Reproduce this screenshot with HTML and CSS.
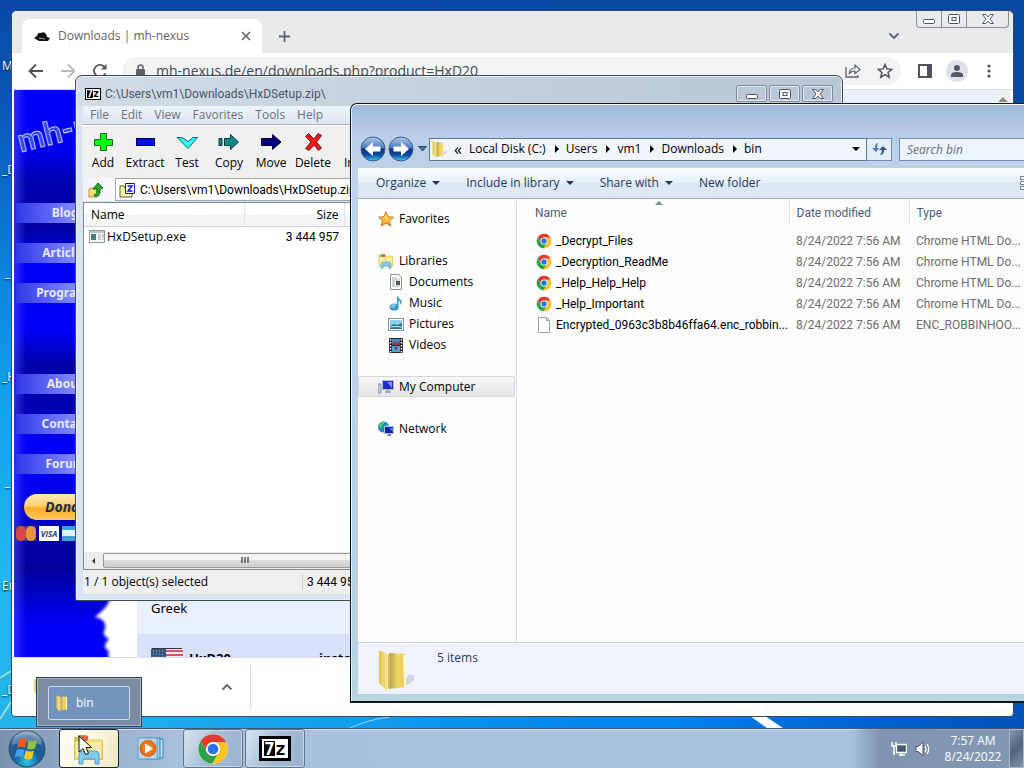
FILE: index.html
```html
<!DOCTYPE html>
<html lang="en">
<head>
<meta charset="utf-8">
<title>Desktop</title>
<link rel="stylesheet" href="styles.css">
</head>
<body>
<svg class="defs" aria-hidden="true">
  <defs>
    <linearGradient id="gold" x1="0" x2="1"><stop offset="0" stop-color="#e3c348"/><stop offset="1" stop-color="#fbf0b0"/></linearGradient>
    <linearGradient id="gold2" x1="0" x2="1"><stop offset="0" stop-color="#b89e40"/><stop offset=".5" stop-color="#f0d76c"/><stop offset="1" stop-color="#e6c850"/></linearGradient>
    <linearGradient id="orbblue" x1="0" y1="0" x2="0" y2="1"><stop offset="0" stop-color="#b4cbe8"/><stop offset=".45" stop-color="#4d79bd"/><stop offset=".5" stop-color="#0b3382"/><stop offset=".75" stop-color="#0b4a9e"/><stop offset="1" stop-color="#3ed0f4"/></linearGradient>
    <radialGradient id="startorb" cx=".5" cy=".85" r=".9"><stop offset="0" stop-color="#2fc8ee"/><stop offset=".4" stop-color="#155c98"/><stop offset=".75" stop-color="#2e5f92"/><stop offset="1" stop-color="#9fbbd6"/></radialGradient>
    <radialGradient id="note" cx=".4" cy=".3" r=".8"><stop offset="0" stop-color="#8fd4f4"/><stop offset="1" stop-color="#1470b4"/></radialGradient>
    <linearGradient id="starfill" x1="0" y1="0" x2="0" y2="1"><stop offset="0" stop-color="#ffe878"/><stop offset="1" stop-color="#f39a18"/></linearGradient>
    <radialGradient id="glow"><stop offset="0" stop-color="#ff9a3c"/><stop offset="1" stop-color="#e4640c"/></radialGradient>
    <filter id="soft"><feGaussianBlur stdDeviation="1.500"/></filter>
  </defs>
  <symbol id="chrome" viewBox="0 0 48 48">
    <circle cx="24" cy="24" r="22" fill="#fff"/>
    <path fill="#e33b2e" d="M24 14H43.6A22 22 0 0 0 5.54 12.03L15.34 29A10 10 0 0 1 24 14z"/>
    <path fill="#fcc31e" d="M32.66 29L22.86 45.97A22 22 0 0 0 43.6 14H24A10 10 0 0 1 32.66 29z"/>
    <path fill="#2ba24c" d="M15.34 29L5.54 12.03A22 22 0 0 0 22.86 45.97L32.66 29A10 10 0 0 1 15.34 29z"/>
    <circle cx="24" cy="24" r="10.4" fill="#fff"/><circle cx="24" cy="24" r="8" fill="#2b74e8"/>
  </symbol>
  <symbol id="folder" viewBox="0 0 36 44">
    <path d="M24 38q12-2 13-10l-6-2z" fill="#9aa0b0" opacity=".35"/>
    <path d="M11 5L28 6v33L11 41z" fill="url(#gold2)"/>
    <path d="M25 7l3-1v33l-2 1z" fill="#fff8d0"/>
    <path d="M1 2l11 5v32l-3 4L1 35z" fill="url(#gold)"/>
    <path d="M11 7v33" stroke="#a88c34" fill="none"/>
  </symbol>
  <symbol id="library" viewBox="0 0 32 32">
    <path d="M1 4h12l2 3h15v20H1z" fill="#d8c05a"/><path d="M5 2h9v7H5z" fill="#79b957"/><path d="M8 3h7v5H8z" fill="#e8604a"/><path d="M17 4h11v7H17z" fill="#f4f4e8"/>
    <path d="M2 8h12l2-2h13v20H2z" fill="#f3dc78"/><path d="M3 9h11v15H3zM17 9h11v15H17z" fill="#faedaa"/>
    <path d="M6 31V22q0-4 4-4h12q4 0 4 4v9h-4v-5H10v5z" fill="#84c8ec" stroke="#4a9ccc"/>
  </symbol>
  <symbol id="minus" viewBox="0 0 12 12"><rect x=".5" y="6.5" width="11" height="4" rx="1" fill="#fff" stroke="#4e5560"/></symbol>
  <symbol id="maxi" viewBox="0 0 12 12"><rect x=".5" y="1.5" width="11" height="9" rx="1" fill="#fff" stroke="#4e5560"/><rect x="4" y="4.5" width="4" height="3" fill="#fff" stroke="#4e5560"/></symbol>
  <symbol id="shut" viewBox="0 0 12 12"><path d="M.6 1.5h3.2L6 3.9l2.2-2.4h3.2L8 6l3.4 4.5H8.200L6 8.100l-2.200 2.400H.6L4 6z" fill="#fff" stroke="#4e5560"/></symbol>
</svg>

<div class="screen">
<main class="desktop">
  <svg class="streaks" viewBox="0 0 1024 728" preserveAspectRatio="none" aria-hidden="true"><path d="M750 716h15l18 12h-16z" fill="#fff"/><path d="M350 728q20-9 40-11" stroke="#8fdcff" fill="none"/><path d="M0 678l11-7M0 719l11-17" stroke="#9ee0c8" stroke-width="2" fill="none"/></svg>
  <span class="label l1">M</span><span class="label l2">_D</span><span class="label l3">_</span><span class="label l4">_H</span><span class="label l5">_</span><span class="label l6">En</span><span class="label l7">_D</span>

  <section class="browser" aria-label="Browser">
    <header class="tabstrip">
      <div class="tab">
        <svg width="16" height="16" viewBox="0 0 16 16"><path d="M3 8q1-4 4-3q3-2 5 1l1 3 3 1-2 3H5L0 10z" fill="#111"/><path d="M5 10l6 1" stroke="#999"/></svg>
        <span class="tab-title">Downloads | mh-nexus</span>
        <button class="plain" aria-label="Close tab"><svg width="10" height="10" viewBox="0 0 10 10"><path d="M1 1l8 8M9 1l-8 8" stroke="#5f6368" stroke-width="1.600"/></svg></button>
      </div>
      <button class="plain newtab" aria-label="New tab"><svg width="13" height="13" viewBox="0 0 13 13"><path d="M6.500 1v11M1 6.500h11" stroke="#5f6368" stroke-width="1.800"/></svg></button>
      <button class="plain tabsearch" aria-label="Search tabs"><svg width="12" height="12" viewBox="0 0 12 12"><path d="M1.500 3.500L6 8l4.500-4.500" fill="none" stroke="#5f6368" stroke-width="1.800"/></svg></button>
      <div class="controls joined">
        <button aria-label="Minimize"><svg width="12" height="12"><use href="#minus"/></svg></button><button aria-label="Maximize"><svg width="12" height="12"><use href="#maxi"/></svg></button><button class="wide" aria-label="Close"><svg width="12" height="12"><use href="#shut"/></svg></button>
      </div>
    </header>
    <div class="navbar">
      <button class="plain" aria-label="Back"><svg width="16" height="16" viewBox="0 0 16 16"><path d="M15 8H2M8 1.500L1.500 8 8 14.500" fill="none" stroke="#505458" stroke-width="1.800"/></svg></button>
      <button class="plain" aria-label="Forward"><svg width="16" height="16" viewBox="0 0 16 16"><path d="M1 8h13M8 1.500L14.500 8 8 14.500" fill="none" stroke="#b8babd" stroke-width="1.800"/></svg></button>
      <button class="plain" aria-label="Reload"><svg width="16" height="16" viewBox="0 0 16 16"><path d="M13.500 10.500A6 6 0 1 1 13 4.500" fill="none" stroke="#505458" stroke-width="1.800"/><path d="M9 6.500h5.500V1z" fill="#505458"/></svg></button>
      <div class="omnibox">
        <svg width="12" height="16" viewBox="0 0 12 16"><rect x="2" y="6" width="9" height="8" rx="1" fill="#5f6368"/><path d="M4 7V4.500a2.500 2.500 0 0 1 5 0V7" fill="none" stroke="#5f6368" stroke-width="1.500"/></svg>
        <input class="url" aria-label="Address" value="mh-nexus.de/en/downloads.php?product=HxD20">
        <button class="plain" aria-label="Share"><svg width="16" height="16" viewBox="0 0 16 16"><path d="M1 4v10h12v-2" fill="none" stroke="#5f6368" stroke-width="1.300"/><path d="M4 11q1-6 6-6V2l5 4.500-5 4V8q-4 0-6 3z" fill="none" stroke="#5f6368" stroke-width="1.200"/></svg></button>
        <button class="plain" aria-label="Bookmark"><svg width="16" height="16" viewBox="0 0 16 16"><path d="M8 1.500l1.900 4.400 4.800.4-3.600 3.200 1.100 4.700L8 11.700l-4.200 2.500 1.100-4.700L1.300 6.300l4.800-.4z" fill="none" stroke="#505458" stroke-width="1.500"/></svg></button>
      </div>
      <button class="plain" aria-label="Side panel"><svg width="16" height="16" viewBox="0 0 16 16"><rect x="2" y="2" width="12" height="12" fill="none" stroke="#505458" stroke-width="2"/><path d="M10 2h5v12h-5z" fill="#505458"/></svg></button>
      <button class="plain profile" aria-label="Profile"><svg width="14" height="14" viewBox="0 0 14 14"><circle cx="7" cy="4" r="3" fill="#505860"/><path d="M1 13v-2q0-3 6-3t6 3v2z" fill="#505860"/></svg></button>
      <button class="plain" aria-label="Menu"><svg width="16" height="16" viewBox="0 0 16 16"><circle cx="8" cy="3" r="1.600" fill="#505458"/><circle cx="8" cy="8" r="1.600" fill="#505458"/><circle cx="8" cy="13" r="1.600" fill="#505458"/></svg></button>
    </div>
    <div class="page">
      <nav class="sidebar">
        <span class="sitelogo">mh-nexus</span>
        <a href="#">Blog</a><a href="#">Articles</a><a href="#">Programs</a><a class="later" href="#">About</a><a href="#">Contact</a><a href="#">Forum</a>
        <button class="donate">Donate</button>
        <div class="cards"><span class="mc"><i></i><i></i></span><span class="visa">VISA</span><span class="amex"></span></div>
        <svg class="torn" width="56" height="76" viewBox="0 0 56 76" aria-hidden="true"><path d="M60-4H30q4 14-1 22-2 8-15 18 12 2 10 12-4 6 4 10-8 8 0 12-2 6 2 12h30z" fill="#fff" filter="url(#soft)"/><path d="M40 40q-4 12-8 16 6 6 2 20h24V40z" fill="#fff"/></svg>
      </nav>
      <div class="article">
        <p class="lang">Greek</p>
        <div class="product">
          <svg width="32" height="22" viewBox="0 0 32 22"><rect width="32" height="22" rx="2" fill="#f8e8ec"/><path d="M13 3h19M13 7h19M0 13h32M0 17h32" stroke="#d0556a" stroke-width="2"/><path d="M0 2q0-2 2-2h13v11H0z" fill="#34567e"/><path d="M2 3h12M2 6h12M2 9h12" stroke="#a8bcd0" stroke-dasharray="1 2"/><path d="M1 .5h30" stroke="#333"/></svg>
          <b class="pname">HxD20</b><b>installable</b>
        </div>
      </div>
      <div class="pagescroll" aria-hidden="true"><svg width="10" height="6"><path d="M0 6l5-5 5 5z" fill="#8a8a8a"/></svg></div>
    </div>
    <footer class="downloads">
      <svg width="14" height="18"><use href="#folder"/></svg>
      <button class="plain dlmore" aria-label="More"><svg width="12" height="12" viewBox="0 0 12 12"><path d="M1.500 8.500L6 4l4.500 4.500" fill="none" stroke="#5f6368" stroke-width="1.800"/></svg></button>
    </footer>
  </section>

  <section class="zipwin" aria-label="7-Zip">
    <header class="ziptitle">
      <span class="seven small"><b>7</b><b>z</b></span>
      <span class="path">C:\Users\vm1\Downloads\HxDSetup.zip\</span>
      <div class="controls">
        <button aria-label="Minimize"><svg width="12" height="12"><use href="#minus"/></svg></button><button aria-label="Maximize"><svg width="12" height="12"><use href="#maxi"/></svg></button><button aria-label="Close"><svg width="12" height="12"><use href="#shut"/></svg></button>
      </div>
    </header>
    <nav class="menu"><button>File</button><button>Edit</button><button>View</button><button>Favorites</button><button>Tools</button><button>Help</button></nav>
    <div class="ziptools">
      <button><svg width="22" height="20" viewBox="0 0 22 20"><path d="M8.500 1.500h6v6h6v6h-6v5h-6v-5h-6v-6h6z" fill="#00ff10" stroke="#126a12"/></svg>Add</button>
      <button><svg width="22" height="20" viewBox="0 0 22 20"><rect x="2.500" y="6.500" width="18" height="7" fill="#0010f0" stroke="#000040"/></svg>Extract</button>
      <button><svg width="22" height="20" viewBox="0 0 22 20"><path d="M1 5.500h5l6 4 5-4h4.500L12 16.500z" fill="#30f4f4" stroke="#0b6c78"/></svg>Test</button>
      <button><svg width="22" height="20" viewBox="0 0 22 20"><path d="M1 6.500h3v7H1zM6.500 6.500h6v-4l8 7.500-8 7.500v-4h-6z" fill="#108888" stroke="#063a40"/></svg>Copy</button>
      <button><svg width="22" height="20" viewBox="0 0 22 20"><path d="M1.500 6.500h11v-4l8.500 7.500-8.500 7.500v-4h-11z" fill="#000080" stroke="#000030"/></svg>Move</button>
      <button><svg width="22" height="20" viewBox="0 0 22 20"><path d="M3.500 4.500l3-3L12 7l4-5.500 3.500 2L14.500 10l5 6-3 2.500L12 13l-5 5.500-3.500-2L9 10z" fill="#f01818" stroke="#801010"/></svg>Delete</button>
      <button><svg width="22" height="20" viewBox="0 0 22 20"><path d="M9 2h5v4H9zM9 8h5v10H9z" fill="#f0e010" stroke="#665"/></svg>Info</button>
    </div>
    <div class="zipaddr">
      <button class="up" aria-label="Up"><svg width="16" height="16" viewBox="0 0 16 16"><path d="M1 7l4-1 4 1v8H1z" fill="#f2dd70" stroke="#b89a3c"/><path d="M10 14q-4 1-4-1 3 0 3-6H5l5-6 5 5-3 1q1 5-2 7z" fill="#36a832" stroke="#146a14"/></svg></button>
      <div class="zipbox"><svg width="16" height="16" viewBox="0 0 16 16"><path d="M1 4h4l1 2h7v9H1z" fill="#ffff9a" stroke="#555"/><path d="M6.500 1.500h9v10h-9z" fill="#fff" stroke="#1414a0"/><path d="M8.500 4h4.500L9 9h4.500" fill="none" stroke="#1010c0" stroke-width="1.400"/></svg><input class="path" aria-label="Archive path" value="C:\Users\vm1\Downloads\HxDSetup.zip\"></div>
    </div>
    <div class="ziplist">
      <table>
        <colgroup><col class="zc1"><col class="zc2"><col></colgroup>
        <thead><tr><th>Name</th><th class="num">Size</th><th></th></tr></thead>
        <tbody><tr><td><span class="cell"><svg width="16" height="13" viewBox="0 0 16 13"><rect x=".5" y=".5" width="15" height="12" fill="#f4f6f8" stroke="#8a9a9c"/><path d="M1 2h14" stroke="#b8c8cc" stroke-width="2"/><path d="M2 4h5v6H2z" fill="#4b7c74"/><path d="M9 5h3M9 7h3M9 9h3M14 4v4M14 9v1" stroke="#98a0a8"/></svg>HxDSetup.exe</span></td><td class="num">3 444 957</td><td></td></tr></tbody>
      </table>
      <div class="hscroll" aria-hidden="true"><svg width="5" height="8"><path d="M4 1v6L1 4z" fill="#333"/></svg><div class="thumb"><svg width="9" height="7"><path d="M1 0v6M4 0v6M7 0v6" stroke="#555" stroke-width="1.500"/></svg></div></div>
    </div>
    <footer class="zipstatus"><span>1 / 1 object(s) selected</span><span>3 444 957</span></footer>
  </section>

  <section class="explorer" aria-label="bin">
    <header class="exhead">
      <button class="orb" aria-label="Back"><svg width="26" height="26" viewBox="0 0 26 26"><circle cx="13" cy="13" r="12" fill="url(#orbblue)" stroke="#415a86"/><path d="M5 13l8-7v4.500h7.500v5H13V20z" fill="#fff"/></svg></button>
      <button class="orb" aria-label="Forward"><svg width="26" height="26" viewBox="0 0 26 26"><circle cx="13" cy="13" r="12" fill="url(#orbblue)" stroke="#415a86"/><path d="M21 13l-8-7v4.500H5.500v5H13V20z" fill="#fff"/></svg></button>
      <button class="plain recent" aria-label="Recent"><svg width="9" height="6"><path d="M.5.5h8l-4 4.500z" fill="#4f78ae" stroke="#274470"/></svg></button>
      <nav class="crumbs">
        <svg width="15" height="18"><use href="#folder"/></svg><span class="back">«</span>
        <a href="#">Local Disk (C:)</a><i class="tri"></i><a href="#">Users</a><i class="tri"></i><a href="#">vm1</a><i class="tri"></i><a href="#">Downloads</a><i class="tri"></i><a href="#">bin</a>
        <i class="down"></i>
      </nav>
      <button class="refresh" aria-label="Refresh"><svg width="16" height="14" viewBox="0 0 16 14"><path d="M7 1Q4 1 4 6H1l4 4 3-4H6q0-3 1-5z" fill="#4678bc"/><path d="M9 13q4 0 4-5h3l-4-4-4 4h3q0 3-2 5z" fill="#2d5490"/></svg></button>
      <input class="search" placeholder="Search bin" aria-label="Search bin">
    </header>
    <div class="exbody">
      <div class="command"><button>Organize<i class="down"></i></button><button>Include in library<i class="down"></i></button><button>Share with<i class="down"></i></button><button>New folder</button>
        <button class="view" aria-label="View"><svg width="20" height="14" viewBox="0 0 20 14"><path d="M.5.5h4v3h-4zM.5 5.500h4v3h-4zM.5 10.500h4v3h-4zM7 2h9M7 7h9M7 12h9" fill="#fff" stroke="#6a7c94"/></svg></button></div>
      <div class="panes">
        <nav class="tree">
          <a href="#"><svg width="16" height="16" viewBox="0 0 16 16"><path d="M8 .8l2.200 4.900 5.300.5-4 3.500 1.200 5.300L8 12.300 3.300 15l1.200-5.300-4-3.500 5.300-.5z" fill="url(#starfill)" stroke="#c87828"/></svg>Favorites</a>
          <a class="gap" href="#"><svg width="16" height="16"><use href="#library"/></svg>Libraries</a>
          <a class="sub" href="#"><svg width="16" height="16" viewBox="0 0 16 16"><path d="M2.500.5h8l3 3v12h-11z" fill="#fff" stroke="#868c92"/><path d="M4 4h5M4 6h8M4 8h3M4 10h3M4 12h8" stroke="#a0a8b0"/><path d="M8 7h4v4H8z" fill="#4b5560"/></svg>Documents</a>
          <a class="sub" href="#"><svg width="16" height="16" viewBox="0 0 16 16"><ellipse cx="6" cy="12" rx="4.500" ry="3.500" fill="url(#note)"/><path d="M9 12V0q1 3 3.500 4.500Q15 7 12.500 10q0-4-2-4.500V12z" fill="#3f95c4"/></svg>Music</a>
          <a class="sub" href="#"><svg width="16" height="16" viewBox="0 0 16 16"><rect x=".5" y="2.500" width="15" height="12" fill="#fff" stroke="#8c969e"/><path d="M2 4h12v9H2z" fill="#8ed0f0"/><path d="M2 10l4-2 3 1 5-2v6H2z" fill="#26758c"/><path d="M2 11q5-1 12 0" stroke="#d5f2f8" fill="none"/></svg>Pictures</a>
          <a class="sub" href="#"><svg width="16" height="16" viewBox="0 0 16 16"><path d="M1 1h14v15H1z" fill="#20262e"/><path d="M4 2h8v6H4z" fill="#4688c4"/><path d="M4 9h8v6H4z" fill="#52a4e4"/><path d="M4 7l3-3 2 2 3-2v4H4zM6 10h4l-2 4z" fill="#8a3f50"/><path d="M2.500 2v14M13.500 2v14" stroke="#fff" stroke-width="1.500" stroke-dasharray="1.500 1.500"/></svg>Videos</a>
          <a class="gap current" href="#"><svg width="16" height="16" viewBox="0 0 16 16"><path d="M0 5h3v9H0z" fill="#c4ccd8" stroke="#8e98a8"/><path d="M4.500 1.500h11v9h-11z" fill="#1b2cc0" stroke="#b8c0d0"/><path d="M9 3h5v6z" fill="#7f9bf0"/><path d="M8 11h4l1 3H7z" fill="#a0aaba"/></svg>My Computer</a>
          <a class="gap" href="#"><svg width="16" height="16" viewBox="0 0 16 16"><circle cx="5.500" cy="6" r="5.500" fill="#1b88b8"/><path d="M1 3q3-4 6-2L4 5 2 8zM6 6l4-3v5z" fill="#5ac474"/><path d="M6.500 5.500h9v7h-9z" fill="#1020b4" stroke="#b4c4e4"/><path d="M11 7h4v4z" fill="#5a7ae8"/><path d="M10 13h3v2h-4z" fill="#78889c"/></svg>Network</a>
        </nav>
        <div class="files">
          <i class="sort"></i>
          <table>
            <colgroup><col class="fc1"><col class="fc2"><col></colgroup>
            <thead><tr><th>Name</th><th>Date modified</th><th>Type</th></tr></thead>
            <tbody>
              <tr><td><span class="cell"><svg width="16" height="16"><use href="#chrome"/></svg>_Decrypt_Files</span></td><td>8/24/2022 7:56 AM</td><td>Chrome HTML Do...</td></tr>
              <tr><td><span class="cell"><svg width="16" height="16"><use href="#chrome"/></svg>_Decryption_ReadMe</span></td><td>8/24/2022 7:56 AM</td><td>Chrome HTML Do...</td></tr>
              <tr><td><span class="cell"><svg width="16" height="16"><use href="#chrome"/></svg>_Help_Help_Help</span></td><td>8/24/2022 7:56 AM</td><td>Chrome HTML Do...</td></tr>
              <tr><td><span class="cell"><svg width="16" height="16"><use href="#chrome"/></svg>_Help_Important</span></td><td>8/24/2022 7:56 AM</td><td>Chrome HTML Do...</td></tr>
              <tr><td><span class="cell"><svg width="16" height="16" viewBox="0 0 16 16"><path d="M2.500.5h8l3 3v12h-11z" fill="#fff" stroke="#9a9ea2"/><path d="M10.500.5v3h3" fill="none" stroke="#9a9ea2"/></svg>Encrypted_0963c3b8b46ffa64.enc_robbin...</span></td><td>8/24/2022 7:56 AM</td><td>ENC_ROBBINHOO...</td></tr>
            </tbody>
          </table>
        </div>
      </div>
      <footer class="details"><svg width="36" height="44"><use href="#folder"/></svg><span>5 items</span></footer>
    </div>
  </section>

  <div class="flyout"><button><svg width="14" height="18"><use href="#folder"/></svg>bin</button></div>
</main>

<footer class="taskbar">
  <button class="start" aria-label="Start"><svg width="38" height="38" viewBox="0 0 38 38"><circle cx="19" cy="19" r="18" fill="url(#startorb)" stroke="#2d4a68"/><path d="M4 15a15 14 0 0 1 30 0q-15-6-30 0z" fill="#fff" opacity=".25"/><path d="M11 10q4-3 8-.5L17 18q-4-2-8 0z" fill="#ee5a24"/><path d="M20.500 10.500q4 2 8.500-.5l-2 8.500q-4 2-8 0z" fill="#8cc63c"/><path d="M8.500 20q4-2 8 0l-2 7.500q-4-2-8 .5z" fill="#40a0e8"/><path d="M18 20.500q4 2 8 0l-2 8q-4 2-8-.5z" fill="#fcc824"/></svg></button>
  <button class="task active" aria-label="Windows Explorer"><svg width="34" height="32"><use href="#library"/></svg></button>
  <button class="task idle" aria-label="Media Player"><svg width="28" height="26" viewBox="0 0 28 26"><path d="M12 3h14v19H12z" fill="#bcdcf0" stroke="#3c88b8"/><path d="M9 2h14v21H9z" fill="#9ccbe8" stroke="#3c88b8"/><path d="M1 2h19v21H1z" fill="#b6d9f0" stroke="#5aa0cc"/><circle cx="11" cy="12.500" r="8.500" fill="url(#glow)"/><path d="M8 7.500l8 5-8 5z" fill="#fff"/></svg></button>
  <button class="task open" aria-label="Chrome"><svg width="32" height="32"><use href="#chrome"/></svg></button>
  <button class="task open" aria-label="7-Zip"><span class="seven big"><b>7</b><b>z</b></span></button>
  <div class="tray">
    <svg width="16" height="16" viewBox="0 0 16 16"><path d="M5.500 3.500h10v8h-10zM8 14h6M10 12v2" fill="#4a5a6a" stroke="#fff" stroke-width="1.300"/><path d="M1 1v4h4V1M3 5v9" fill="none" stroke="#fff" stroke-width="1.500"/></svg>
    <svg width="16" height="16" viewBox="0 0 16 16"><path d="M1 5.500h2.500L8 1v14l-4.500-4.500H1z" fill="#fff" stroke="#556"/><path d="M10 5q2 3 0 6M12 3q3.500 5 0 10" fill="none" stroke="#fff" stroke-width="1.200"/></svg>
    <div class="clock"><span>7:57 AM</span><span>8/24/2022</span></div>
  </div>
  <button class="peek" aria-label="Show desktop"></button>
</footer>
<svg class="pointer" width="15" height="22" viewBox="0 0 15 22" aria-hidden="true"><path d="M1 1v16l4-3.500 2.500 6 3-1.200L8 12.500h5.500z" fill="#fff" stroke="#111"/></svg>
</div>
</body>
</html>
```

FILE: styles.css
```css
* { box-sizing: border-box; }
body { margin: 0; font: 12px/16px "Open Sans", "Noto Sans", sans-serif; color: #000; }
button, input { font: inherit; color: inherit; margin: 0; padding: 0; border: 0; background: none; min-width: 0; }
a { color: inherit; text-decoration: none; }
svg { flex: none; display: block; }
table { border-collapse: collapse; table-layout: fixed; width: 100%; }
th { font-weight: normal; text-align: left; }
.defs { position: absolute; width: 0; height: 0; }
.screen { position: relative; height: 100vh; display: flex; flex-direction: column; overflow: hidden; }
.desktop {
  position: relative; flex: 1; overflow: hidden;
  background: linear-gradient(90deg, transparent 0, transparent 5%, #0084f0 65%, #0062d0 85%, #0052b8 100%) 0 100% / 100% 30px no-repeat,
    linear-gradient(90deg, transparent 40%, #0848a0 100%),
    linear-gradient(#0a48a4 0, #0a58b8 15%, #0b84da 38%, #12a4ea 56%, #20b8ee 80%, #24b4ec 100%);
}
.streaks { position: absolute; inset: 0; width: 100%; height: 100%; }
.label { position: absolute; left: 2px; color: #fff; text-shadow: 0 1px 2px #000; }
.l1 { top: 58px; } .l2 { top: 162px; } .l3 { top: 265px; left: 5px; } .l4 { top: 369px; } .l5 { top: 474px; left: 5px; } .l6 { top: 578px; } .l7 { top: 682px; }

.plain { display: grid; place-items: center; min-width: 16px; height: 16px; }
.controls { display: flex; gap: 2px; }
.controls button { width: 31px; height: 17px; display: grid; place-items: center; border: 1px solid #7c8a9b; border-radius: 2px; box-shadow: inset 0 0 0 1px #e4ebf1; }
.controls.joined { gap: 0; align-self: flex-start; border: 1px solid #8a8e94; border-top: 0; border-radius: 0 0 4px 4px; }
.controls.joined button { width: 25px; height: 16px; border: 0; border-right: 1px solid #8a8e94; border-radius: 0; box-shadow: none; }
.controls.joined .wide { width: 41px; border-right: 0; }

.browser { position: absolute; inset: 10px 10px 11px 11px; display: flex; flex-direction: column; border: 1px solid #38495c; border-radius: 6px 6px 4px 4px; background: #fff; overflow: hidden; }
.tabstrip { display: flex; align-items: center; height: 42px; padding: 0 4px 0 10px; background: #e8eaec; }
.tab { align-self: flex-end; display: flex; align-items: center; gap: 8px; width: 240px; height: 34px; padding: 0 8px 0 12px; border-radius: 8px 8px 0 0; background: #fff; color: #606468; }
.tab-title { flex: 1; }
.newtab { margin: 8px 0 0 14px; }
.tabsearch { margin: 8px 14px 0 auto; }
.navbar { display: flex; align-items: center; gap: 16px; height: 37px; padding: 0 16px; border-bottom: 1px solid #dcdfe4; }
.omnibox { flex: 1; display: flex; align-items: center; gap: 16px; height: 28px; margin-left: -2px; padding: 0 8px 0 12px; border-radius: 14px; background: #f1f3f4; color: #44484c; }
.url { flex: 1; margin-left: -6px; font-size: 14px; }
.profile { width: 22px; height: 22px; border-radius: 50%; background: #dfe2e8; margin: 0 -3px; }
.page { flex: 1; display: flex; margin: 0 2px; overflow: hidden; }
.sidebar {
  position: relative; width: 123px; display: flex; flex-direction: column; align-items: flex-start; gap: 20px; padding: 113px 0 0 2px;
  background: linear-gradient(90deg, #5a5aff80 0, transparent 12px), linear-gradient(#0000fa 0, #0000f0 60px, #0000b0 90px, #0000a4 140px, #0000f8 170px, #0000f8 240px, #0000a8 275px, #0000b4 320px, #0000f4 350px, #0000f0 400px, #0000a4 450px, #00009c 480px, #0000f4 530px);
}
.sidebar a { width: 98px; height: 20px; text-align: center; font: bold 12px/20px "Noto Sans", sans-serif; color: #e8e8ff; background: linear-gradient(90deg, #3038e8, #8088ff 60%, #6870f8); }
.sidebar .later { margin-top: 51px; }
.sitelogo { position: absolute; left: 8px; top: 32px; white-space: nowrap; font: bold 32px/36px "Lato", sans-serif; color: #3444e8; -webkit-text-stroke: 1px #b4c0ff; transform: rotate(-14deg); transform-origin: 0 100%; }
.donate { margin-left: 8px; width: 90px; height: 26px; border-radius: 13px; background: linear-gradient(#ffe9b8, #ffd070 45%, #ffac28 55%, #ffc864); font: italic bold 14px/26px "Open Sans", sans-serif; color: #1c2c4c; }
.cards { display: flex; gap: 3px; margin-top: -14px; }
.cards span { width: 20px; height: 15px; overflow: hidden; }
.mc { display: flex; background: #403878; } .mc i { flex: 1; border-radius: 8px; background: #d84848; } .mc i + i { background: #e8943c; }
.visa { background: #fff; color: #183c88; font: italic bold 8px/15px "Open Sans", sans-serif; text-align: center; }
.amex { background: linear-gradient(#3ca0d8 30%, #e0f0f8 30%, #e0f0f8 65%, #3ca0d8 65%); }
.torn { position: absolute; right: 0; bottom: 0; }
.article { flex: 1; display: flex; flex-direction: column; justify-content: flex-end; background: #ebf0fe; font: 13px/16px "Noto Sans", sans-serif; }
.lang { margin: 0; padding: 0 14px 18px; }
.product { display: flex; align-items: flex-start; height: 23px; padding: 14px 14px 0; overflow: hidden; background: #d9e2fc; line-height: 20px; }
.pname { width: 130px; margin-left: 6px; }
.pagescroll { width: 16px; padding: 6px 3px; background: #f1f1f1; }
.downloads { display: flex; align-items: center; width: 239px; height: 59px; padding: 0 16px 0 22px; position: relative; }
.downloads::before { content: ""; position: absolute; left: 0; top: 0; width: 100vw; border-top: 1px solid #dcdfe4; }
.downloads::after { content: ""; position: absolute; right: 0; top: 8px; height: 44px; border-right: 1px solid #dadce0; }
.dlmore { margin-left: auto; }

.zipwin { position: absolute; left: 75px; top: 75px; width: 75vw; max-width: calc(100% - 80px); bottom: 127px; display: flex; flex-direction: column; padding: 0 7px 6px; border: 1px solid #3f4b5a; border-radius: 7px 7px 2px 2px; background: linear-gradient(90deg, #d2dde8, #c0cedb 60%, #b8c8d8) 0 0 / 100% 30px no-repeat, #d9e4f0; box-shadow: inset 0 0 0 1px #e8eff6; }
.ziptitle { display: flex; align-items: center; gap: 4px; height: 30px; padding: 5px 2px 0; color: #4a5664; }
.path { font-family: Roboto, "Open Sans", sans-serif; }
.ziptitle .controls { margin-left: auto; }
.seven { display: inline-flex; border: 2px solid #000; background: #fff; font-family: "DejaVu Sans Mono", monospace; }
.seven b { flex: 1; text-align: center; color: #000; }
.seven b:first-child { background: #000; color: #fff; }
.small { width: 16px; height: 12px; border-width: 1px; padding: 1px; font-size: 10px; line-height: 8px; }
.big { width: 32px; height: 25px; border-width: 3px; padding: 2px; font-size: 18px; line-height: 16px; }
.menu { display: flex; gap: 12px; height: 19px; padding: 0 7px; background: linear-gradient(#f0f4fb, #dfe5f1); border-bottom: 1px solid #a8acb4; color: #6c717a; }
.ziptools { display: flex; height: 53px; margin-left: -1px; background: #f0f0f0; border-top: 1px solid #fff; }
.ziptools button { min-width: 42px; display: flex; flex-direction: column; align-items: center; gap: 3px; padding-top: 6px; }
.zipaddr { display: flex; height: 23px; background: #f0f0f0; }
.up { width: 32px; padding-left: 5px; background: linear-gradient(90deg, #f0f2f8, #fafbfe); }
.zipbox { flex: 1; display: flex; align-items: center; gap: 5px; padding-left: 3px; border: 1px solid #a0a6ae; background: #fff; }
.zipbox input { flex: 1; }
.ziplist { flex: 1; display: flex; flex-direction: column; margin-top: 1px; border: 1px solid #82878f; background: #fff; }
.zc1 { width: 160px; } .zc2 { width: 100px; }
.ziplist th { height: 23px; padding: 2px 5px 0 7px; border-right: 1px solid #e3e5e8; border-bottom: 1px solid #d5d5d5; background: linear-gradient(#fff 50%, #f4f5f7 50%); }
.ziplist td { height: 21px; padding: 0 5px; }
.ziplist .num { text-align: right; }
.ziplist td.num, .zipstatus span + span { font-family: Roboto, "Open Sans", sans-serif; }
.cell { display: flex; align-items: center; gap: 4px; white-space: nowrap; }
.ziplist .cell { gap: 2px; }
.hscroll { display: flex; align-items: center; height: 17px; margin-top: auto; padding-left: 7px; gap: 7px; background: #ececec; }
.thumb { display: grid; place-items: center; width: 284px; height: 15px; border: 1px solid #979797; border-radius: 2px; background: linear-gradient(#f4f4f4 45%, #dcdcdc 50%, #cfcfcf); }
.zipstatus { display: flex; align-items: center; height: 24px; background: #f0eff0; }
.zipstatus span { padding-left: 1px; width: 219px; }
.zipstatus span + span { padding-left: 4px; border-left: 1px solid #d0d0d0; }

.explorer { position: absolute; left: 350px; top: 103px; right: -40px; bottom: 25px; display: flex; flex-direction: column; padding: 0 7px 7px; border: 1px solid #101820; border-width: 1px 1px 2px; border-radius: 7px 7px 0 0; background: linear-gradient(#9fb6d8 0, #b8cee8 30px, #bdd3ea 60px, #b9d0e8 70%, #b8d4e0 100%); box-shadow: inset 0 1px 0 #fff, inset 1px 0 0 #e0ecf8; }
.exhead { display: flex; align-items: center; height: 64px; padding-top: 26px; padding-left: 2px; }
.orb { width: 26px; margin-right: 2px; }
.recent { min-width: 14px; margin-left: -1px; }
.crumbs { display: flex; align-items: center; gap: 7px; width: 438px; height: 23px; padding: 0 6px 0 2px; border: 1px solid #5d7898; background: #f2f6fc; }
.back { font-size: 16px; }
.tri { border-left: 4px solid #000; border-top: 4px solid transparent; border-bottom: 4px solid transparent; margin: 0 0 0 2px; }
.down { border-top: 4px solid; border-left: 4px solid transparent; border-right: 4px solid transparent; }
.crumbs .down { margin-left: auto; }
.refresh { width: 25px; height: 23px; display: grid; place-items: center; border: 1px solid #6f8db0; border-left: 0; background: #e4eefa; }
.search { flex: 1; height: 23px; margin-left: 7px; padding: 0 7px; border: 1px solid #6f8db0; background: #edf4fc; }
.search::placeholder { color: #666e78; font-style: italic; opacity: 1; }
.exbody { flex: 1; display: flex; flex-direction: column; background: #fdfdfe; }
.command { display: flex; align-items: center; gap: 26px; height: 31px; padding: 0 16px 0 18px; background: linear-gradient(#fafcff, #e8f0fb 48%, #dbe6f4 52%, #dfe9f6); border-bottom: 1px solid #a0afc3; color: #1e395b; }
.command button { display: flex; align-items: center; gap: 6px; }
.command .view { margin-left: auto; }
.panes { flex: 1; display: flex; }
.tree { width: 159px; padding: 9px 1px 0 0; border-right: 1px solid #dbe4ee; }
.tree a { display: flex; align-items: center; gap: 5px; height: 21px; padding-left: 20px; }
.tree .sub { padding-left: 30px; }
.tree .gap { margin-top: 21px; }
.tree .current { padding-left: 19px; border: 1px solid #d6d6da; border-radius: 2px; background: linear-gradient(#f8f8f9, #e6e6e8); }
.files { flex: 1; position: relative; font-family: Roboto, "Open Sans", sans-serif; }
.sort { position: absolute; left: 138px; top: 2px; border-bottom: 4px solid #7a8a9c; border-left: 4px solid transparent; border-right: 4px solid transparent; }
.fc1 { width: 272px; } .fc2 { width: 120px; }
.files th { height: 25px; padding: 2px 0 0 7px; border-right: 1px solid #e2e6ec; color: #4c607a; }
.files th:first-child { padding-left: 18px; }
.files tbody::before { content: ""; display: block; height: 6px; }
.files td { height: 21px; padding: 0 0 0 7px; color: #6d6d6d; white-space: nowrap; }
.files td:first-child { padding-left: 19px; color: #000; }
.details { display: flex; gap: 23px; height: 52px; padding: 5px 20px 0; border-top: 1px solid #ccd3de; background: #f0f3fd; color: #2c3e5c; line-height: 20px; }

.flyout { position: absolute; left: 36px; bottom: 1px; width: 106px; height: 50px; padding: 8px 11px; background: #7c8ba4; border: 1px solid #344256; box-shadow: inset 0 0 0 1px #a6b4c6; }
.flyout button { display: flex; align-items: center; gap: 6px; width: 82px; height: 34px; padding-left: 7px; border: 1px solid #cfdcf0; border-radius: 2px; background: #7394bd; color: #fff; }

.taskbar { display: flex; height: 40px; padding-left: 8px; gap: 2px; border-top: 1px solid #3d5875; background: linear-gradient(90deg, #7890ac 0, #8ea6c2 60px, #a8c0dc 180px, #a8c2de 100%); box-shadow: inset 0 1px 0 #d0deec; }
.start { width: 38px; margin-right: 11px; }
.task { width: 60px; display: grid; place-items: center; border: 1px solid transparent; border-radius: 3px; }
.active { border-color: #20262c; background: linear-gradient(115deg, #fffff8, #f8f4dc 60%, #efe8c4); }
.open { border-color: #60768f; background: linear-gradient(115deg, #dae6f2, #a4bbd4 50%, #9ab4d0); box-shadow: inset 0 0 0 1px #c8d8e8; }
.tray { margin-left: auto; display: flex; align-items: center; gap: 8px; padding: 0 4px 0 40px; background: linear-gradient(90deg, transparent, #7e94b0 30px, #8298b2); color: #fff; }
.clock { display: flex; flex-direction: column; width: 64px; margin-left: 2px; text-align: center; padding-top: 1px; }
.peek { width: 15px; margin-left: -2px; border: 1px solid #a8b8c8; background: linear-gradient(135deg, #8496aa, #52677e 50%, #8094a8); }
.pointer { position: absolute; left: 78px; bottom: 11px; }
```
